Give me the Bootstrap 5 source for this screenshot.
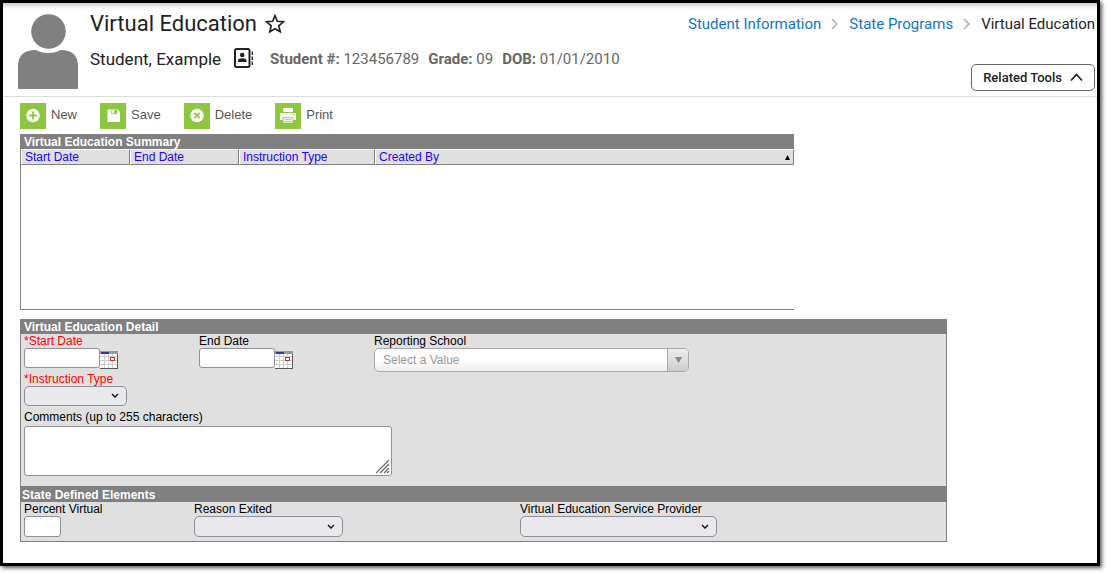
<!DOCTYPE html>
<html lang="en">
<head>
<meta charset="utf-8">
<meta name="viewport" content="width=device-width, initial-scale=1">
<title>Virtual Education</title>
<link href="https://cdn.jsdelivr.net/npm/bootstrap@5.3.0/dist/css/bootstrap.min.css" rel="stylesheet">
<style>
  body { font-family: "Liberation Sans", Arial, sans-serif; font-size: 12px; line-height: 14px; color: #000; background: #fff; padding: 0 7px 7px 0; }
  .app-frame { border: 3px solid #000; box-shadow: 2px 2px 4px rgba(0,0,0,.65), inset 0 5px 5px -3px rgba(0,0,0,.25); }
  .page-head { font-family: Roboto, sans-serif; border-bottom: 1px solid #ddd; padding: 11px 2px 4px 15px; gap: 12px; }
  .avatar { width: 60px; height: 78px; }
  .page-title { font-size: 22px; line-height: 20px; font-weight: 400; color: #222; }
  .person { font-size: 17px; line-height: 24px; color: #222; margin-top: 13px; }
  .facts { font-size: 15px; color: #666; gap: 9px; margin-left: 16px; }
  .plain-btn { background: none; border: 0; padding: 0; color: #222; display: flex; }
  .contact { margin: 0 0 3px 11px; }
  .crumbs { font-size: 15px; line-height: 20px; gap: 10px; color: #222; }
  .crumbs a { color: #1474c4; text-decoration: none; }
  .crumbs li { display: flex; align-items: center; gap: 10px; }
  .related { font-size: 13px; line-height: 15px; font-weight: 500; color: #222; border: 1px solid #666; border-radius: 5px; background: #fff; height: 27px; padding: 0 11px; gap: 8px; margin-top: 30px; }
  .work { padding: 6px 17px 21px; }
  .tool-bar { gap: 23px; margin-bottom: 5px; }
  .tool-btn { font-size: 13px; line-height: 15px; color: #555; background: none; border: 0; padding: 0; gap: 5px; }
  .tool-btn svg { width: 26px; height: 26px; background: #8dc63f; }
  .tool-btn span { padding-bottom: 4px; }
  .bar { background: #808080; color: #fff; font-size: 12px; line-height: 15px; font-weight: 700; margin: 0; padding: 1px 3px 0; height: 15px; }
  .state-bar { height: 16px; padding: 2px 1px 0; }
  .summary { max-width: 774px; height: 176px; border: solid #808080; border-width: 0 0 1px 1px; margin-bottom: 9px; }
  .grid-head { table-layout: fixed; width: 100%; border-collapse: separate; border-spacing: 0; }
  .grid-head th { font-weight: 400; background: #e0e0e0; border: 1px solid; border-color: #fff #808080 #808080 #fff; padding: 0 3px; height: 16px; line-height: 14px; }
  .grid-head th:nth-child(-n+2) { width: 109px; }
  .grid-head th:nth-child(3) { width: 136px; }
  .grid-head a { color: #20f; text-decoration: none; }
  .detail { max-width: 927px; background: #e0e0e0; border: 1px solid #808080; border-top: 0; }
  .detail label { display: block; line-height: 13px; }
  .fields { display: grid; grid-template-columns: 175px 175px minmax(0, 1fr); row-gap: 1px; padding: 1px 3px 10px; }
  .state-fields { display: grid; grid-template-columns: 170px 326px minmax(0, 1fr); padding: 1px 3px 4px; }
  .whole { grid-column: 1 / -1; }
  .req { color: #f00; }
  .fld { height: 20px; border: 1px solid #8f8f9d; border-radius: 3px; background-color: #fff; padding: 1px 3px; display: block; }
  .fld-date { width: 76px; }
  .state-fields .fld { height: 21px; }
  .fld-pct { width: 37px; }
  select.fld { appearance: none; border-radius: 5px; background: #e9e9ed url("data:image/svg+xml,%3Csvg xmlns='http://www.w3.org/2000/svg' width='8' height='6' viewBox='0 0 8 6'%3E%3Cpath d='M1 1l3 3 3-3' fill='none' stroke='%23111' stroke-width='1.4'/%3E%3C/svg%3E") no-repeat right 7px center; }
  .sel-type { width: 103px; }
  .sel-exit { width: 149px; }
  .sel-prov { width: 197px; }
  .memo { width: 368px; max-width: 100%; height: 50px; resize: both; margin-top: 2px; }
  .memo::-webkit-resizer { background: url("data:image/svg+xml,%3Csvg xmlns='http://www.w3.org/2000/svg' width='15' height='15'%3E%3Cpath d='M0 13L13 0M4 13L13 4M8 13L13 8M11 13l2-2' fill='none' stroke='%23666' stroke-width='1.2'/%3E%3C/svg%3E") no-repeat; }
  .combo { width: 315px; max-width: 100%; height: 24px; border: 1px solid #aaa; border-radius: 5px; overflow: hidden; background: linear-gradient(#fff 50%, #eee); }
  .combo input { border: 0; background: none; padding: 0 8px; min-width: 0; }
  .combo input::placeholder { color: #999; opacity: 1; }
  .combo button { width: 21px; border: 0; border-left: 1px solid #aaa; padding: 0; background: linear-gradient(#eee, #ccc); }
  .cal { margin-top: 3px; }
</style>
</head>
<body class="min-vh-100 d-flex flex-column">
<div class="app-frame flex-grow-1">
  <header class="page-head d-flex align-items-start">
    <svg class="avatar flex-shrink-0" viewBox="0 0 60 78" fill="#808080" aria-hidden="true"><circle cx="30.500" cy="17.500" r="17.300"/><path d="M0 75V52Q0 36 18 36q5 3 12.500 3t12-3Q60 36 60 52V75z"/></svg>
    <div class="flex-grow-1">
      <div class="d-flex align-items-center">
        <h1 class="page-title m-0">Virtual Education</h1>
        <button class="plain-btn ms-2" aria-label="Add to favorites"><svg width="20" height="20" viewBox="0 0 18 18" fill="none" stroke="#222" stroke-width="1.500"><path d="M9 1.500l2.100 5 5.500.5-4.200 3.600 1.300 5.400L9 13.200 4.300 16l1.300-5.400L1.400 7l5.500-.5z"/></svg></button>
      </div>
      <div class="person d-flex align-items-center flex-wrap">
        <span>Student, Example</span>
        <button class="plain-btn contact" aria-label="Contact card"><svg width="22" height="20" viewBox="0 0 22 20"><rect x="3" y="1" width="14.500" height="18" rx="1.500" fill="none" stroke="#222" stroke-width="2"/><circle cx="10.200" cy="7" r="2.300" fill="#222"/><path d="M6 14v-1.500q0-2.300 4.200-2.300t4.300 2.300V14z" fill="#222"/><path d="M20.300 3.500v3.500m0 1.500v3.500m0 1.500V17" stroke="#222" stroke-width="1.300"/></svg></button>
        <span class="facts d-flex"><span><b>Student #:</b> 123456789</span><span><b>Grade:</b> 09</span><span><b>DOB:</b> 01/01/2010</span></span>
      </div>
    </div>
    <div class="d-flex flex-column align-items-end">
      <nav aria-label="Breadcrumb"><ol class="crumbs list-unstyled d-flex mb-0">
        <li><a href="#">Student Information</a><svg width="8" height="12" fill="none" stroke="#bbb" stroke-width="1.800"><path d="M1 1l5 5-5 5"/></svg></li>
        <li><a href="#">State Programs</a><svg width="8" height="12" fill="none" stroke="#bbb" stroke-width="1.800"><path d="M1 1l5 5-5 5"/></svg></li>
        <li aria-current="page">Virtual Education</li>
      </ol></nav>
      <button class="related d-flex align-items-center">Related Tools<svg width="13" height="9" fill="none" stroke="#222" stroke-width="1.700"><path d="M1 7.500l5.500-6 5.500 6"/></svg></button>
    </div>
  </header>
  <main class="work">
    <div class="tool-bar d-flex flex-wrap">
      <button class="tool-btn d-flex align-items-center"><svg viewBox="0 0 26 26"><circle cx="13" cy="12.500" r="6.700" fill="#fff"/><path d="M13 8.500v8M9 12.500h8" stroke="#8dc63f" stroke-width="1.800"/></svg><span>New</span></button>
      <button class="tool-btn d-flex align-items-center"><svg viewBox="0 0 26 26"><path d="M7.500 6.500h10l2.500 2v10.500H7.500z" fill="#fff"/><path d="M11 7h6v4h-6z" fill="#8dc63f"/><path d="M11.500 7h3v3.500h-3z" fill="#fff" opacity=".8"/></svg><span>Save</span></button>
      <button class="tool-btn d-flex align-items-center"><svg viewBox="0 0 26 26"><circle cx="13" cy="12.500" r="6.700" fill="#fff"/><path d="M10.300 9.800l5.400 5.400m0-5.400l-5.400 5.400" stroke="#8dc63f" stroke-width="1.700"/></svg><span>Delete</span></button>
      <button class="tool-btn d-flex align-items-center"><svg viewBox="0 0 26 26"><path d="M8 5h10v4H8zM5 10h16v7h-2.500v-3h-11v3H5z" fill="#fff"/><path d="M8.500 14.700h9v5h-9z" fill="#fff"/><path d="M9.500 16.300h7m-7 2h7" stroke="#8dc63f" stroke-width=".8"/><path d="M17.500 11.500h2" stroke="#8dc63f"/></svg><span>Print</span></button>
    </div>
    <section class="summary">
      <h2 class="bar">Virtual Education Summary</h2>
      <table class="grid-head">
        <thead><tr>
          <th><a href="#">Start Date</a></th><th><a href="#">End Date</a></th><th><a href="#">Instruction Type</a></th>
          <th><div class="d-flex justify-content-between align-items-center"><a href="#">Created By</a><svg width="5" height="5" aria-hidden="true"><path d="M2.500 0L5 5H0z"/></svg></div></th>
        </tr></thead>
      </table>
    </section>
    <form class="detail">
      <h2 class="bar">Virtual Education Detail</h2>
      <div class="fields">
        <div>
          <label class="req" for="start">*Start Date</label>
          <div class="d-flex align-items-start"><input class="fld fld-date" id="start" type="text">
            <button type="button" class="plain-btn cal" aria-label="Pick start date"><svg width="18" height="18"><rect width="18" height="18" fill="#555"/><path d="M0 0h17v17H0z" fill="#fff"/><path d="M0 5.500h17M0 9.500h17M0 13.500h17M4.500 3v14M8.500 3v14M12.500 3v14" stroke="#ccc"/><path d="M0 0h18v3H0z" fill="#999"/><path d="M1 1h8v2H1z" fill="#33a"/><rect x="10.500" y="6.500" width="4" height="3" fill="#fff" stroke="#b33"/></svg></button></div>
        </div>
        <div>
          <label for="end">End Date</label>
          <div class="d-flex align-items-start"><input class="fld fld-date" id="end" type="text">
            <button type="button" class="plain-btn cal" aria-label="Pick end date"><svg width="18" height="18"><rect width="18" height="18" fill="#555"/><path d="M0 0h17v17H0z" fill="#fff"/><path d="M0 5.500h17M0 9.500h17M0 13.500h17M4.500 3v14M8.500 3v14M12.500 3v14" stroke="#ccc"/><path d="M0 0h18v3H0z" fill="#999"/><path d="M1 1h8v2H1z" fill="#33a"/><rect x="10.500" y="6.500" width="4" height="3" fill="#fff" stroke="#b33"/></svg></button></div>
        </div>
        <div>
          <label for="school">Reporting School</label>
          <div class="combo d-flex"><input class="flex-grow-1" id="school" type="text" placeholder="Select a Value"><button type="button" aria-label="Show schools"><svg class="d-block mx-auto" width="7" height="6" fill="#888"><path d="M0 0h7L3.500 6z"/></svg></button></div>
        </div>
        <div class="whole">
          <label class="req" for="kind">*Instruction Type</label>
          <select class="fld sel-type" id="kind"><option></option></select>
        </div>
        <div class="whole mt-1">
          <label for="memo">Comments (up to 255 characters)</label>
          <textarea class="fld memo" id="memo" maxlength="255"></textarea>
        </div>
      </div>
      <h2 class="bar state-bar">State Defined Elements</h2>
      <div class="state-fields">
        <div><label for="pct">Percent Virtual</label><input class="fld fld-pct" id="pct" type="text"></div>
        <div><label for="exit">Reason Exited</label><select class="fld sel-exit" id="exit"><option></option></select></div>
        <div><label for="prov">Virtual Education Service Provider</label><select class="fld sel-prov" id="prov"><option></option></select></div>
      </div>
    </form>
  </main>
</div>
<script src="https://cdn.jsdelivr.net/npm/bootstrap@5.3.0/dist/js/bootstrap.bundle.min.js"></script>
</body>
</html>
